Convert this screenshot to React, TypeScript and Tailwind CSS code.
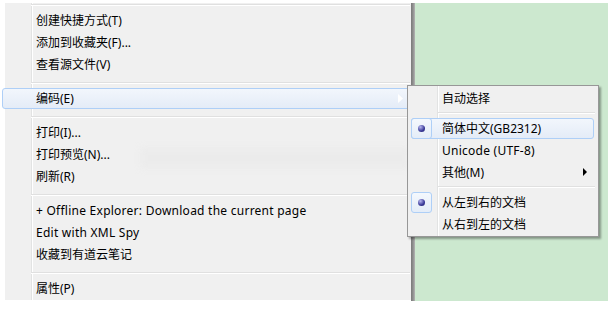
import React from "react";

const font = { fontFamily: '"Noto Sans", "Noto Sans CJK SC", sans-serif' };

function Sep({ h = 12, off = 7 }: { h?: number; off?: number }) {
  return (
    <div className="relative" style={{ height: h }}>
      <div className="absolute left-[26px] right-[1px]" style={{ top: off }}>
        <div className="h-px bg-[#e0e0e0]" />
        <div className="h-px bg-white" />
      </div>
    </div>
  );
}

function Item({ children, latin = false }: { children: React.ReactNode; latin?: boolean }) {
  return (
    <div
      className={
        "h-[22px] flex items-center pl-[31px] pt-[2px] text-[12px] text-black whitespace-nowrap" +
        (latin ? " tracking-[0.25px]" : "")
      }
    >
      {children}
    </div>
  );
}

function Dot() {
  return (
    <div className="absolute left-0 top-[1px] w-[21px] h-[21px] rounded-[3px] border border-[#aecff7] bg-gradient-to-b from-[#f4f8fd] to-[#e4edf8] flex items-center justify-center">
      <div className="w-[7px] h-[7px] rounded-full bg-[radial-gradient(circle_at_35%_30%,#b8b8f0,#3a3a98_60%,#22226a)]" />
    </div>
  );
}

export default function App() {
  return (
    <div className="relative w-[616px] h-[312px] bg-white overflow-hidden" style={font}>
      <div className="flex pt-[3px] pl-[5px]">
        {/* main menu */}
        <div className="relative w-[406px] h-[297px] bg-[#f0f0f0]">
          <div className="absolute left-[26px] top-0 bottom-0 w-[2px] flex">
            <div className="w-px bg-[#e2e3e3]" />
            <div className="w-px bg-white" />
          </div>
          <div className="relative flex flex-col">
            <div className="relative h-[6px]">
              <div className="absolute left-[26px] right-[1px] top-[1px]">
                <div className="h-px bg-[#e0e0e0]" />
                <div className="h-px bg-white" />
              </div>
            </div>
            <Item>创建快捷方式(T)</Item>
            <Item>添加到收藏夹(F)...</Item>
            <Item>查看源文件(V)</Item>
            <Sep />
            <div className="relative h-[22px]">
              <div className="absolute left-[-3px] right-[-2px] top-[1px] h-[21px] rounded-[3px] border border-[#aecff7] bg-gradient-to-b from-[#f2f6fc] to-[#e4ecf7]" />
              <div className="relative h-[22px] flex items-center pl-[31px] pt-[2px] text-[12px] text-black">编码(E)</div>
              <svg className="absolute left-[393px] top-[7px]" width="5" height="9" viewBox="0 0 5 9">
                <path d="M0 0 L5 4.5 L0 9 Z" fill="#ffffff" />
              </svg>
            </div>
            <Sep />
            <Item>打印(I)...</Item>
            <Item>打印预览(N)...</Item>
            <Item>刷新(R)</Item>
            <Sep />
            <Item latin>+ Offline Explorer: Download the current page</Item>
            <Item latin>Edit with XML Spy</Item>
            <Item>收藏到有道云笔记</Item>
            <Sep />
            <Item>属性(P)</Item>
          </div>
          {/* faint ghost of fading submenu */}
          <div className="absolute left-[135px] top-[144px] w-[270px] h-[22px] bg-[#e9e9e9] opacity-60 blur-[3px]" />
        </div>
        <div className="w-[4px] h-[298px] bg-gradient-to-r from-[#7a7a7a] via-[#8e8e8e] to-[#b5b5b5]" />
        <div className="w-[193px] h-[298px] bg-[#cce8cf]" />
      </div>

      {/* submenu */}
      <div className="absolute left-[407px] top-[85px] w-[192px] h-[152px] bg-[#f0f0f0] border border-[#979797] shadow-[2px_2px_2px_rgba(0,0,0,0.35)] pt-[1px] px-[3px]">
        <div className="absolute left-[29px] top-0 bottom-0 w-[2px] flex">
          <div className="w-px bg-[#e2e3e3]" />
          <div className="w-px bg-white" />
        </div>
        <div className="relative flex flex-col">
          <div className="h-[22px] flex items-center pl-[31px] pt-[2px] text-[12px] text-black">自动选择</div>
          <div className="relative h-[8px]">
            <div className="absolute left-[27px] right-0 top-[3px]">
              <div className="h-px bg-[#e0e0e0]" />
              <div className="h-px bg-white" />
            </div>
          </div>
          <div className="relative h-[22px]">
            <div className="absolute left-0 right-[1px] top-[1px] h-[21px] rounded-[3px] border border-[#aecff7] bg-gradient-to-b from-[#f2f6fc] to-[#e4ecf7]" />
            <Dot />
            <div className="relative h-[22px] flex items-center pl-[31px] pt-[2px] text-[12px] text-black">简体中文(GB2312)</div>
          </div>
          <div className="h-[22px] flex items-center pl-[31px] pt-[2px] text-[12px] text-black tracking-[0.25px]">Unicode (UTF-8)</div>
          <div className="relative h-[22px] flex items-center pl-[31px] pt-[2px] text-[12px] text-black">
            其他(M)
            <svg className="absolute left-[172px] top-[7px]" width="4" height="8" viewBox="0 0 4 8">
              <path d="M0 0 L4 4 L0 8 Z" fill="#000000" />
            </svg>
          </div>
          <div className="relative h-[8px]">
            <div className="absolute left-[27px] right-0 top-[3px]">
              <div className="h-px bg-[#e0e0e0]" />
              <div className="h-px bg-white" />
            </div>
          </div>
          <div className="relative h-[22px]">
            <Dot />
            <div className="relative h-[22px] flex items-center pl-[31px] pt-[2px] text-[12px] text-black">从左到右的文档</div>
          </div>
          <div className="h-[22px] flex items-center pl-[31px] pt-[2px] text-[12px] text-black">从右到左的文档</div>
        </div>
      </div>
    </div>
  );
}
